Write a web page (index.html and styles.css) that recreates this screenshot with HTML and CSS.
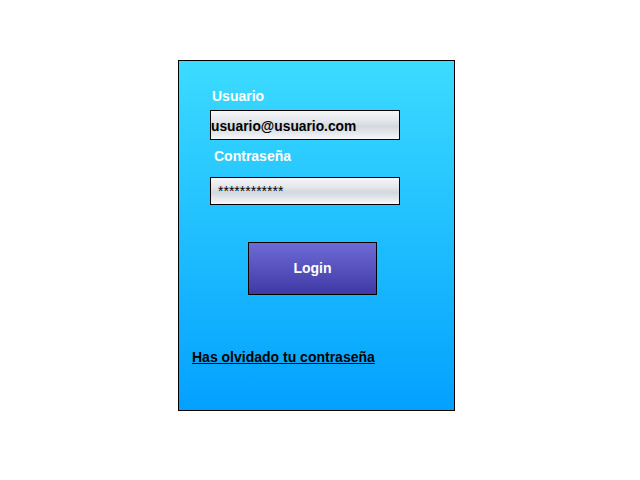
FILE: index.html
```html
<!DOCTYPE html>
<html lang="es">
<head>
<meta charset="utf-8">
<link rel="stylesheet" href="styles.css">
</head>
<body>
<div class="panel">
  <div class="label label-user">Usuario</div>
  <div class="field field-user">usuario@usuario.com</div>
  <div class="label label-pass">Contraseña</div>
  <div class="field field-pass">************</div>
  <div class="btn">Login</div>
  <a class="link" href="#">Has olvidado tu contraseña</a>
</div>
</body>
</html>
```
FILE: styles.css
```css
html, body {
  margin: 0;
  padding: 0;
  background: #fff;
}
body {
  font-family: "Liberation Sans", Arial, sans-serif;
}
.panel {
  margin: 60px 0 0 178px;
  width: 275px;
  height: 349px;
  border: 1px solid #000;
  background: linear-gradient(to bottom, #3cdbff, #03a1ff);
  display: flex;
  flex-direction: column;
  align-items: flex-start;
}
.label {
  color: #fff;
  font-weight: bold;
  font-size: 14px;
  line-height: 16px;
}
.label-user {
  margin: 27px 0 0 33px;
}
.label-pass {
  margin: 8px 0 0 35px;
}
.field {
  box-sizing: border-box;
  width: 190px;
  border: 1px solid #000;
  margin-left: 31px;
  background: linear-gradient(to bottom, #f5f6f8 0%, #e4e7eb 35%, #d3d8de 55%, #e6e9ed 80%, #f6f7f9 100%);
  color: #000;
  font-size: 14px;
  display: flex;
  align-items: center;
}
.field-user {
  margin-top: 6px;
  height: 30px;
  font-weight: bold;
  font-size: 13.8px;
  padding-top: 2px;
}
.field-pass {
  margin-top: 13px;
  height: 28px;
  padding-left: 7px;
  font-weight: normal;
}
.btn {
  box-sizing: border-box;
  margin: 37px 0 0 69px;
  width: 129px;
  height: 53px;
  border: 1px solid #000;
  background: linear-gradient(to bottom, #6e6ad6, #3e39a5);
  color: #fff;
  font-weight: bold;
  font-size: 14px;
  display: flex;
  align-items: center;
  justify-content: center;
  padding-bottom: 2px;
}
.link {
  margin: 54px 0 0 13px;
  color: #000;
  font-weight: bold;
  font-size: 14px;
  line-height: 16px;
  text-decoration: underline;
}
```
